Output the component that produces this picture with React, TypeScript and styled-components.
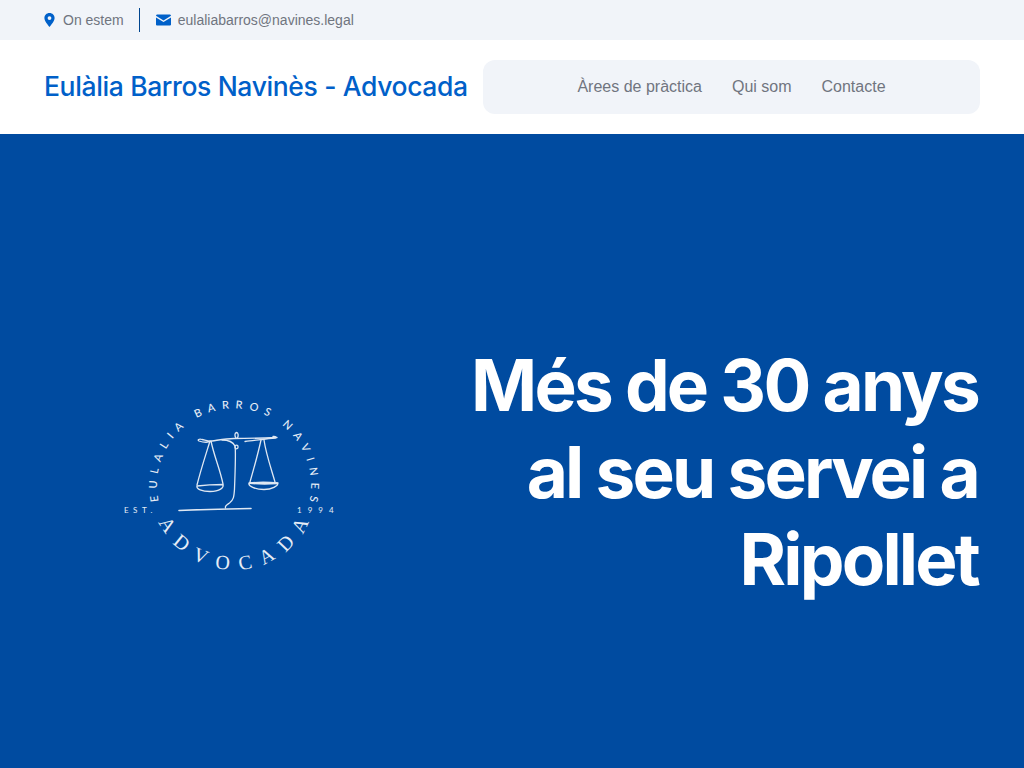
import styled, { createGlobalStyle } from "styled-components";

const GlobalStyle = createGlobalStyle`
    html, body {
        margin: 0;
        padding: 0;
        background: #ffffff;
        font-family: "Liberation Sans", Arial, sans-serif;
    }
`;

const Page = styled.div`
    width: 1024px;
    height: 768px;
    overflow: hidden;
    display: flex;
    flex-direction: column;
`;

const TopBar = styled.div`
    height: 40px;
    background: #f1f4f9;
    display: flex;
    align-items: center;
    padding: 0 44px;
`;

const TopItem = styled.div`
    display: flex;
    align-items: center;
    gap: 7px;
    font-size: 14px;
    color: #70757f;
`;

const Divider = styled.div`
    width: 1px;
    height: 24px;
    background: #00458f;
    margin: 0 16px 0 15px;
`;

const Header = styled.header`
    height: 94px;
    display: flex;
    align-items: center;
    justify-content: space-between;
    padding: 0 44px;
    background: #ffffff;
`;

const Brand = styled.a`
    margin-bottom: 2px;
    font-family: Inter, "Noto Sans", sans-serif;
    font-size: 26.5px;
    font-weight: 500;
    letter-spacing: -0.37px;
    color: #0060c9;
    white-space: nowrap;
`;

const Nav = styled.nav`
    width: 497px;
    height: 54px;
    box-sizing: border-box;
    background: #f1f4f9;
    border-radius: 12px;
    display: flex;
    align-items: center;
    justify-content: center;
    gap: 30px;
`;

const NavLink = styled.a`
    font-size: 16px;
    color: #70757f;
`;

const Hero = styled.section`
    flex: 1;
    background: #004ba0;
    display: grid;
    grid-template-columns: 372px 1fr;
    align-items: center;
    padding: 42px 44px 0;
`;

const LogoBox = styled.div`
    display: flex;
    justify-content: center;
    margin-top: 26px;
`;

const Headline = styled.h1`
    margin: 0 2px 0 0;
    text-align: right;
    font-family: Inter, "Noto Sans", sans-serif;
    font-size: 71px;
    line-height: 87px;
    font-weight: 700;
    letter-spacing: -2.8px;
    color: #ffffff;
`;

function PinIcon() {
    return (
        <svg width="12" height="14" viewBox="0 0 12 14">
            <path
                fill="#0060c9"
                fillRule="evenodd"
                d="M5.5 0C2.5 0 .4 2.2.4 5c0 3.4 3.6 6.9 5.1 9 1.5-2.1 5.1-5.6 5.1-9 0-2.8-2.1-5-5.1-5zm0 3.2a1.9 1.9 0 1 1 0 3.8 1.9 1.9 0 0 1 0-3.8z"
            />
        </svg>
    );
}

function MailIcon() {
    return (
        <svg width="15" height="12" viewBox="0 0 15 12">
            <path
                fill="#0060c9"
                d="M1.4.5h12.2c.8 0 1.4.6 1.4 1.3L7.5 6.4 0 1.8C0 1.1.6.5 1.4.5zM0 3.4l7.5 4.5L15 3.4v7c0 .7-.6 1.1-1.4 1.1H1.4C.6 11.5 0 11.1 0 10.4z"
            />
        </svg>
    );
}

function Logo() {
    return (
        <svg width="220" height="180" viewBox="120 395 220 180">
            <defs>
                <path id="ring-top" d="M 164.200 518 A 77 77 0 1 1 303.800 518" />
                <path id="ring-bottom" d="M 152.300 501.400 A 83 83 0 0 0 315.700 501.400" />
            </defs>
            <text fontFamily="Lato, sans-serif" fontSize="11" fontWeight="500" fill="#e6edf6" letterSpacing="6.400">
                <textPath href="#ring-top" startOffset="51%" textAnchor="middle">EULALIA BARROS NAVINES</textPath>
            </text>
            <text fontFamily="'Liberation Serif', serif" fontSize="20" fill="#e6edf6" letterSpacing="10.500">
                <textPath href="#ring-bottom" startOffset="52.300%" textAnchor="middle">ADVOCADA</textPath>
            </text>
            <text x="124" y="513" fontFamily="Lato, sans-serif" fontSize="8" fill="#e6edf6" letterSpacing="4.500">EST.</text>
            <text x="297" y="513" fontFamily="Lato, sans-serif" fontSize="8" fill="#e6edf6" letterSpacing="6">1994</text>
            <g fill="none" stroke="#dfe8f3" strokeWidth="1.300" strokeLinecap="round" strokeLinejoin="round">
                <path d="M211 441.500c-3 1-9 .5-12-.5-2-1 0-2.500 3-1.500 3 .5 6 2 10 1.500 7-1 14-2.500 22-2.500 14 0 30-.5 43-1" />
                <path d="M245 441.500c10-1 22-3 30-3.500 2-.5 1-1.800-2-1.500" />
                <path d="M236 438c-1.500-2-1.500-5 .5-5.500 2 0 2 3.500 1 5.500" />
                <path d="M222 440c6 0 11 2 13 6 1 4 0 30-.5 43-.5 8-1 11-5 14-3 2-5 3-4 5" />
                <ellipse cx="236.500" cy="447" rx="1.600" ry="1.800" />
                <path d="M179 510.500c24-1 48-1.500 72-2" strokeWidth="1.600" />
                <path d="M210 441c-4 13-9 28-13 44M211 441c3 15 9 28 12 43" />
                <path d="M197 486c8-1 18-1.500 26-1.500 1 3-3 7-13 7-8 0-14-2.500-13-5.500z" />
                <path d="M261 440c-3 14-7 28-11 42M264 440c2 14 7 28 11 42" />
                <path d="M249 483c9-1 19-1 29 0 0 3-6 6.500-14 6.500-9 0-16-3.500-15-6.500z" />
                <path d="M250 483c9 .8 18 .8 27 .2" strokeWidth="2" />
            </g>
        </svg>
    );
}

export default function App() {
    return (
        <Page>
            <GlobalStyle />
            <TopBar>
                <TopItem>
                    <PinIcon />
                    On estem
                </TopItem>
                <Divider />
                <TopItem>
                    <MailIcon />
                    eulaliabarros@navines.legal
                </TopItem>
            </TopBar>
            <Header>
                <Brand>Eulàlia Barros Navinès - Advocada</Brand>
                <Nav>
                    <NavLink>Àrees de pràctica</NavLink>
                    <NavLink>Qui som</NavLink>
                    <NavLink>Contacte</NavLink>
                </Nav>
            </Header>
            <Hero>
                <LogoBox>
                    <Logo />
                </LogoBox>
                <Headline>
                    Més de 30 anys
                    <br />
                    al seu servei a
                    <br />
                    Ripollet
                </Headline>
            </Hero>
        </Page>
    );
}
